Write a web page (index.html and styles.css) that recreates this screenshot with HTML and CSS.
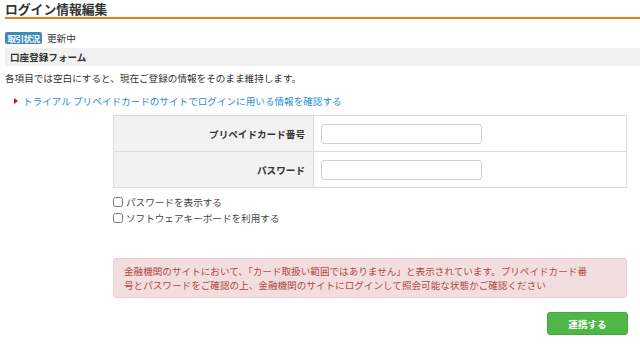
FILE: index.html
```html
<!DOCTYPE html>
<html lang="ja">
<head>
  <meta charset="UTF-8">
  <meta name="viewport" content="width=device-width, initial-scale=1.0">
  <title>ログイン情報編集</title>
  <link rel="stylesheet" href="styles.css">
</head>
<body>
<div class="page">
  <h1 class="page-title">ログイン情報編集</h1>

  <div class="status-row">
    <span class="badge">取引状況</span>
    <span class="status-text">更新中</span>
  </div>

  <h2 class="section-bar">口座登録フォーム</h2>

  <p class="note">各項目では空白にすると、現在ご登録の情報をそのまま維持します。</p>

  <p class="link-row">
    <span class="arrow"></span>
    <a href="#" class="info-link">トライアル プリペイドカードのサイトでログインに用いる情報を確認する</a>
  </p>

  <div class="form-area">
    <table class="form-table">
      <tr>
        <th>プリペイドカード番号</th>
        <td><input type="text" class="text-input"></td>
      </tr>
      <tr>
        <th>パスワード</th>
        <td><input type="password" class="text-input"></td>
      </tr>
    </table>

    <label class="check-row"><input type="checkbox"> パスワードを表示する</label>
    <label class="check-row"><input type="checkbox"> ソフトウェアキーボードを利用する</label>

    <div class="alert">
      金融機関のサイトにおいて、「カード取扱い範囲ではありません」と表示されています。プリペイドカード番<br>号とパスワードをご確認の上、金融機関のサイトにログインして照会可能な状態かご確認ください
    </div>

    <div class="actions">
      <button class="btn-submit">連携する</button>
    </div>
  </div>
</div>
</body>
</html>
```

FILE: styles.css
```css
* {
  margin: 0;
  padding: 0;
  box-sizing: border-box;
}

body {
  font-family: "Noto Sans CJK JP", "Noto Sans", sans-serif;
  font-size: 9.6px;
  color: #333;
  background: #fff;
}

.page {
  padding: 0 0 0 5px;
}

.page-title {
  font-size: 12.8px;
  font-weight: bold;
  line-height: 17px;
  border-bottom: 2px solid #ef7d12;
}

.status-row {
  margin-top: 13px;
  display: flex;
  align-items: center;
  gap: 5px;
  height: 12px;
}

.badge {
  display: inline-block;
  background: #3b8ab8;
  color: #fff;
  font-size: 8.5px;
  font-weight: bold;
  line-height: 12px;
  height: 12px;
  padding: 0 2px;
  border-radius: 2px;
  width: 37px;
  text-align: center;
  letter-spacing: -0.5px;
}

.status-text {
  font-size: 9.6px;
}

.section-bar {
  margin-top: 4px;
  background: #f1f1f1;
  font-size: 9.6px;
  font-weight: bold;
  line-height: 18px;
  height: 18px;
  padding-left: 5px;
}

.note {
  margin-top: 5px;
  line-height: 14px;
}

.link-row {
  margin-top: 9px;
  line-height: 14px;
  display: flex;
  align-items: center;
  padding-left: 9px;
}

.arrow {
  width: 0;
  height: 0;
  border-top: 3px solid transparent;
  border-bottom: 3px solid transparent;
  border-left: 4px solid #c7161e;
  margin-right: 5px;
}

.info-link {
  color: #2a8dd4;
  text-decoration: none;
}

.form-area {
  margin-left: 108px;
  width: 514px;
}

.form-table {
  margin-top: 7px;
  width: 100%;
  border-collapse: collapse;
}

.form-table th,
.form-table td {
  border: 1px solid #dcdcdc;
  height: 36px;
}

.form-table th {
  width: 200px;
  background: #f2f2f2;
  text-align: right;
  padding-right: 8px;
  font-weight: bold;
}

.form-table td {
  padding-left: 7px;
}

.text-input {
  display: block;
  width: 161px;
  height: 20px;
  border: 1px solid #cfcfcf;
  border-radius: 3px;
  background: #fff;
}

.check-row {
  display: flex;
  align-items: center;
  line-height: 16px;
  color: #444;
}

.check-row:first-of-type {
  margin-top: 6px;
}

.check-row input {
  width: 10px;
  height: 10px;
  margin-right: 3px;
}

.alert {
  margin-top: 32px;
  background: #f2dede;
  border: 1px solid #ebcdd1;
  border-radius: 3px;
  color: #b04a44;
  line-height: 14px;
  padding: 5px 10px;
}

.actions {
  display: flex;
  justify-content: flex-end;
  margin-top: 14px;
}

.btn-submit {
  width: 81px;
  height: 23px;
  background: #4fb748;
  border: 1px solid #46a640;
  border-radius: 3px;
  color: #fff;
  font-family: inherit;
  font-size: 9.6px;
  font-weight: bold;
  margin-right: -1px;
}
```
